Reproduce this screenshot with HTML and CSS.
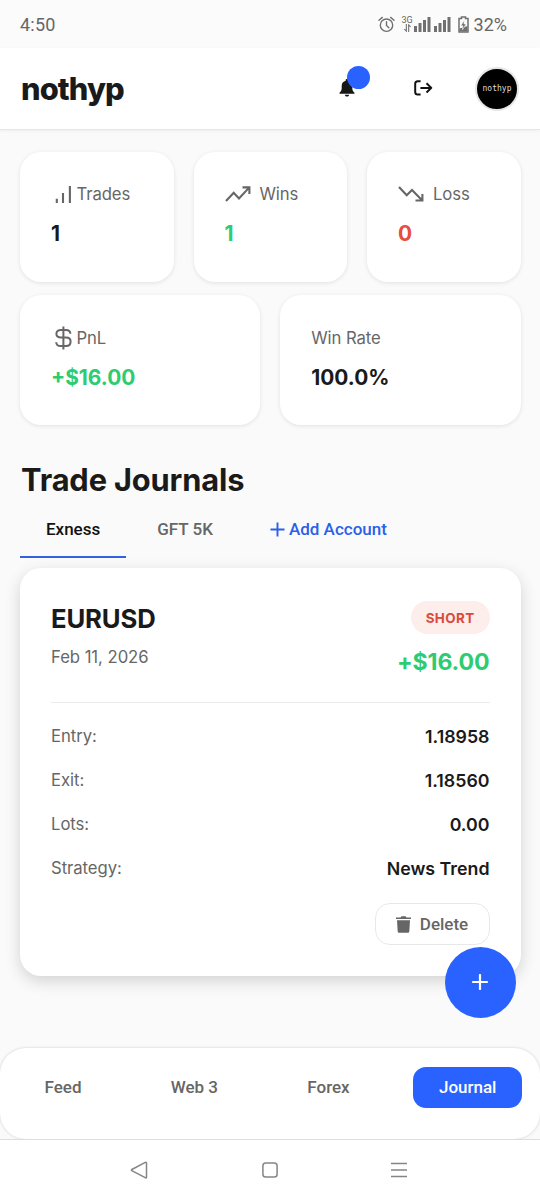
FILE: index.html
```html
<!DOCTYPE html>
<html lang="en">
<head>
<meta charset="utf-8">
<meta name="viewport" content="width=device-width, initial-scale=1">
<title>nothyp – Trade Journals</title>
<link rel="stylesheet" href="styles.css">
</head>
<body>
<div class="screen">
  <div class="status">
    <span class="clock">4:50</span>
    <span class="status-right">
      <svg class="alarm" width="17" height="17" viewBox="0 0 17 17" fill="none" stroke="#707070" stroke-width="1.4" stroke-linecap="round"><circle cx="8.5" cy="9.2" r="6.2"/><path d="M8.5 5.7v3.8l2.3 2.2M1 4.2 4.3 1.4M16 4.2l-3.3-2.8"/></svg>
      <span class="net"><span class="net-label">3G</span><svg width="9" height="8" viewBox="0 0 9 9" fill="none" stroke="#707070" stroke-width="1.2"><path d="M3.2 0v8L1 5.8M5.8 9V1L8 3.2"/></svg></span>
      <svg class="signal" width="37" height="16" viewBox="0 0 37 16" fill="#707070"><path d="M0 10h3v6H0zM4.5 7h3v9h-3zM9 4h3v12H9zM13.5 1h3v15h-3zM20 10h3v6h-3zM24.5 7h3v9h-3zM29 4h3v12h-3zM33.5 1h3v15h-3z"/></svg>
      <svg class="battery" width="11" height="17" viewBox="0 0 11 17"><path d="M3.5 1h4v1.500H10V16H1V2.500h2.500z" fill="none" stroke="#707070" stroke-width="1.5"/><path d="M1.500 12.500 9.500 10v5.500h-8z" fill="#707070"/><path d="M6.200 4.300 2.800 9.800h2.100l-.4 4L8.200 8H6z" fill="#707070" stroke="#fbfbfb" stroke-width=".6"/></svg>
      <span class="percent">32%</span>
    </span>
  </div>

  <header class="header">
    <h1 class="brand">nothyp</h1>
    <div class="actions">
      <button class="icon-button bell" aria-label="Notifications">
        <svg width="16" height="18" viewBox="0 0 16 18" fill="#161616"><path d="M8 0c.8 0 1.300.5 1.300 1.200v.5c2.500.6 4 2.600 4 5v2.600c0 1.800.7 3.100 2.200 4.500v1H.5v-1c1.500-1.400 2.200-2.700 2.200-4.500V6.700c0-2.400 1.500-4.400 4-5v-.5C6.700.5 7.200 0 8 0zM5.800 15.700h4.400c-.2 1.100-1 1.800-2.200 1.800s-2-.7-2.200-1.800z"/></svg>
        <span class="dot"></span>
      </button>
      <button class="icon-button logout" aria-label="Log out">
        <svg width="19" height="16" viewBox="0 0 19 16" fill="none" stroke="#111" stroke-width="2" stroke-linejoin="round"><path d="M6.600 1.200H3.700Q1.200 1.200 1.200 3.700v8.400q0 2.500 2.500 2.500h2.900M6.400 7.900h10.800M12.500 3.300l4.800 4.600-4.800 4.600"/></svg>
      </button>
      <span class="avatar">nothyp</span>
    </div>
  </header>

  <main class="content">
    <section class="stats">
      <div class="stat third">
        <div class="label"><svg class="indent" width="18" height="20" viewBox="0 0 18 20" fill="none" stroke="#666" stroke-width="2.1"><path d="M1.800 19v-4.300M8 19V9.100M14.900 19V2"/></svg>Trades</div>
        <div class="value">1</div>
      </div>
      <div class="stat third">
        <div class="label"><svg class="trend" width="26" height="16" viewBox="0 0 26 16" fill="none" stroke="#666" stroke-width="2.1"><path d="M1 15 8.700 6.800l5.300 5.600L24.300 1.400M17.500 1.400h6.900v6.500"/></svg>Wins</div>
        <div class="value green">1</div>
      </div>
      <div class="stat third">
        <div class="label"><svg class="trend" width="26" height="16" viewBox="0 0 26 16" fill="none" stroke="#666" stroke-width="2.1"><path d="M1 1 8.700 9.300 14 4l10.300 10.400M17.500 14.500h6.900V8"/></svg>Loss</div>
        <div class="value red">0</div>
      </div>
      <div class="stat half second">
        <div class="label"><svg class="indent" width="18" height="24" viewBox="0 0 18 24" fill="none" stroke="#666" stroke-width="2"><path d="M8.400.5v23M15.400 7.800C15.300 5.300 13.500 4 11 4H6C3 4 1.400 5.500 1.400 7.800S3 11.500 6 11.500h5c3.100 0 4.600 1.600 4.600 4S14.100 20 11 20H5.800C3 20 1.300 18.500 1.200 16.200"/></svg>PnL</div>
        <div class="value green">+$16.00</div>
      </div>
      <div class="stat half second">
        <div class="label">Win Rate</div>
        <div class="value">100.0%</div>
      </div>
    </section>

    <h2 class="title">Trade Journals</h2>
    <nav class="tabs">
      <button class="tab active">Exness</button>
      <button class="tab">GFT 5K</button>
      <button class="tab add"><svg width="15" height="15" viewBox="0 0 15 15" fill="none" stroke="#2a5fe9" stroke-width="1.900"><path d="M7.500.5v14M.5 7.500h14"/></svg>Add Account</button>
    </nav>

    <article class="trade">
      <div class="trade-head">
        <div>
          <h3 class="pair">EURUSD</h3>
          <div class="date">Feb 11, 2026</div>
        </div>
        <div class="result">
          <span class="badge">SHORT</span>
          <span class="profit">+$16.00</span>
        </div>
      </div>
      <dl class="details">
        <div class="row"><dt>Entry:</dt><dd>1.18958</dd></div>
        <div class="row"><dt>Exit:</dt><dd>1.18560</dd></div>
        <div class="row"><dt>Lots:</dt><dd>0.00</dd></div>
        <div class="row"><dt>Strategy:</dt><dd>News Trend</dd></div>
      </dl>
      <button class="delete"><svg width="15" height="17" viewBox="0 0 15 17" fill="#666"><path d="M0 1.400h4.500L5.500.3h4l1 1.100H15v1.700H0zM1 4.300h13l-.7 11.200q-.1 1.200-1.300 1.200H3q-1.200 0-1.300-1.200z"/></svg>Delete</button>
    </article>
  </main>

  <button class="fab" aria-label="Add trade"><svg width="16" height="16" viewBox="0 0 16 16" stroke="#fff" stroke-width="2.2" stroke-linecap="round"><path d="M8 1v14M1 8h14"/></svg></button>

  <nav class="bottom">
    <a>Feed</a>
    <a>Web 3</a>
    <a>Forex</a>
    <a class="current">Journal</a>
  </nav>

  <div class="system">
    <svg width="18" height="18" viewBox="0 0 18 18" fill="none" stroke="#858585" stroke-width="1.5" stroke-linejoin="round"><path d="M15.800 1.200Q16.500 1.200 16.500 2v14.200q0 .9-.8.600L1.800 9.700q-.9-.6 0-1.200z"/></svg>
    <svg width="16" height="16" viewBox="0 0 16 16" fill="none" stroke="#858585" stroke-width="1.5"><rect x=".9" y=".9" width="14.2" height="14.2" rx="2.8"/></svg>
    <svg width="16" height="16" viewBox="0 0 16 16" stroke="#858585" stroke-width="1.6"><path d="M0 1.500h16M0 8h16M0 14.500h16"/></svg>
  </div>
</div>
</body>
</html>
```

FILE: styles.css
```css
* { box-sizing: border-box; }

body {
  margin: 0;
  background: #fafafa;
  color: #1a1a1a;
  font-family: Inter, "Liberation Sans", sans-serif;
}

h1, h2, h3, dl, dd { margin: 0; }

svg { display: block; flex: none; }

button {
  border: 0;
  padding: 0;
  background: none;
  font: 500 17px Roboto, sans-serif;
  color: #666;
}

.screen {
  position: relative;
  width: 540px;
  height: 1200px;
  overflow: hidden;
  display: flex;
  flex-direction: column;
}

.status {
  height: 48px;
  flex: none;
  padding: 1px 33px 0 20px;
  display: flex;
  align-items: center;
  justify-content: space-between;
  background: #fbfbfb;
  color: #666;
  font: 400 18px Roboto, sans-serif;
}

.clock { letter-spacing: .2px; }

.status-right {
  display: flex;
  align-items: center;
  margin-top: -1px;
}

.net {
  display: flex;
  flex-direction: column;
  align-items: center;
  width: 11px;
  margin-left: 7px;
}

.net-label { font-size: 9px; line-height: 8px; }

.signal { margin-left: 1px; }

.battery { margin: 0 5px 0 7px; }

.percent { font-size: 18px; margin-top: 1px; }

.header {
  height: 82px;
  flex: none;
  padding: 0 21px;
  display: flex;
  align-items: center;
  justify-content: space-between;
  background: #fff;
  border-bottom: 1px solid #e6e6e6;
  box-shadow: 0 1px 3px rgba(0, 0, 0, .05);
}

.brand {
  font-size: 30.8px;
  font-weight: 800;
  letter-spacing: -.9px;
}

.actions { display: flex; align-items: center; }

.bell { position: relative; top: -1px; }

.dot {
  position: absolute;
  left: 8px;
  top: -13px;
  width: 23px;
  height: 23px;
  border-radius: 50%;
  background: #2962ff;
}

.logout { margin: -2px 42px 0 59px; }

.avatar {
  width: 44px;
  height: 44px;
  border: 2px solid #e5e5e5;
  border-radius: 50%;
  display: flex;
  align-items: center;
  justify-content: center;
  background: #000;
  color: #ddd;
  font: 8px "DejaVu Sans Mono", monospace;
}

.content { padding: 22px 19.5px 0 20px; }

.stats {
  display: grid;
  grid-template-columns: repeat(6, 1fr);
  gap: 13px 20px;
}

.stat {
  height: 130px;
  padding: 29px 31px;
  border-radius: 21px;
  background: #fff;
  box-shadow: 0 1px 4px rgba(0, 0, 0, .1);
}

.second { padding-top: 30px; }

.third { grid-column: span 2; }
.half { grid-column: span 3; }

.label {
  height: 25px;
  display: flex;
  align-items: center;
  color: #666;
  font-size: 16.7px;
  letter-spacing: -.1px;
  white-space: nowrap;
}

.indent { margin: 0 3.5px 0 4px; }
.trend { margin-right: 9px; }

.value {
  margin-top: 12px;
  font-size: 20.9px;
  line-height: 31px;
  font-weight: 700;
}

.green { color: #2ecc71; }
.red { color: #e74c3c; }

.title {
  margin-top: 35px;
  font-size: 30.8px;
  line-height: 39px;
  font-weight: 700;
  letter-spacing: -.15px;
  padding-left: 1px;
}

.tabs {
  display: flex;
  margin-top: 3px;
  gap: 5px;
}

.tab {
  height: 56px;
  padding: 0 26px;
  display: flex;
  align-items: center;
  border-bottom: 2px solid transparent;
}

.active {
  color: #111;
  border-color: #3262df;
}

.add { color: #2a5fe9; gap: 4px; }

.trade {
  height: 408px;
  margin-top: 10px;
  padding: 33px 31px 0;
  display: flex;
  flex-direction: column;
  border-radius: 21px;
  background: #fff;
  box-shadow: 0 5px 16px rgba(0, 0, 0, .16);
}

.trade-head {
  height: 102px;
  display: flex;
  justify-content: space-between;
  border-bottom: 1px solid #ebebeb;
}

.pair {
  font-size: 25.7px;
  line-height: 35px;
  letter-spacing: -.15px;
}

.date {
  margin-top: 10px;
  color: #666;
  font-size: 16.7px;
  line-height: 22px;
  letter-spacing: -.05px;
}

.result {
  display: flex;
  flex-direction: column;
  align-items: flex-end;
}

.badge {
  height: 33px;
  padding: 0 15px;
  border-radius: 17px;
  display: flex;
  align-items: center;
  background: #fdedeb;
  color: #da4a3c;
  font-size: 13.4px;
  font-weight: 700;
  letter-spacing: .4px;
}

.profit {
  margin-top: 11px;
  color: #2ecc71;
  font-size: 23.1px;
  line-height: 34px;
  font-weight: 700;
  letter-spacing: -.1px;
}

.details { padding-top: 11px; }

.row {
  height: 44px;
  display: flex;
  align-items: center;
  justify-content: space-between;
}

dt { color: #666; font-size: 16.7px; letter-spacing: -.05px; }
dd { font-size: 17.8px; font-weight: 600; }

.delete {
  width: 115px;
  height: 42px;
  margin-top: 13px;
  align-self: flex-end;
  display: flex;
  align-items: center;
  justify-content: center;
  gap: 9px;
  border: 1px solid #e8e8e8;
  border-radius: 15px;
}

.fab {
  position: absolute;
  left: 445px;
  top: 947px;
  width: 71px;
  height: 71px;
  padding: 0 1px 2px 0;
  border-radius: 50%;
  display: flex;
  align-items: center;
  justify-content: center;
  background: #2962ff;
}

.bottom {
  height: 91px;
  flex: none;
  margin-top: auto;
  padding: 19px 18px 0 19px;
  display: flex;
  justify-content: space-between;
  border-radius: 26px;
  background: #fff;
  box-shadow: 0 0 3px rgba(0, 0, 0, .18);
  color: #666;
  font: 500 17px Roboto, sans-serif;
}

.bottom a {
  height: 41px;
  padding: 0 25.5px 1px;
  display: flex;
  align-items: center;
  border-radius: 13px;
}

.bottom .current {
  background: #2962ff;
  color: #fff;
}

.system {
  height: 61px;
  flex: none;
  padding: 0 133px 1px 130px;
  display: flex;
  align-items: center;
  justify-content: space-between;
  border-top: 1px solid #dedede;
  background: #fff;
}
```
